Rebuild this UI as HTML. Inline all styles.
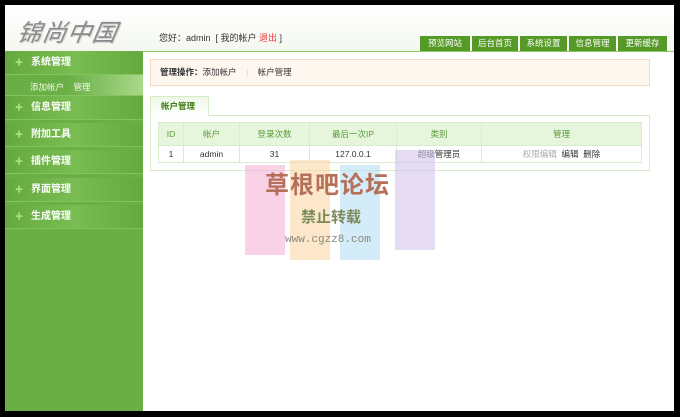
<!DOCTYPE html>
<html><head><meta charset="utf-8"><style>
*{margin:0;padding:0;box-sizing:border-box}
body{width:680px;height:417px;background:#000;position:relative;overflow:hidden;font-family:"Liberation Sans","Noto Sans CJK SC",sans-serif;font-size:9px;color:#333}
.a{position:absolute}
#page{left:5px;top:5px;width:669px;height:406px;background:#fff}
#hdr{left:5px;top:5px;width:669px;height:46px;background:linear-gradient(#fff,#f4f7f0)}
.nav{top:36px;height:15px;background:#559a26;color:#fff;font-size:8.5px;line-height:15px;text-align:center}
#side{left:5px;top:51px;width:138px;height:360px;background:#6aaf45}
.m{left:5px;width:138px;height:24px;color:#fff;font-size:10px;font-weight:bold;line-height:24px;padding-left:26px;background:linear-gradient(90deg,#64a83f,#79bd52 50%,#64a83f);border-bottom:1px solid #82c45d}
.m:before{content:"✚";position:absolute;left:10px;color:#a6e07e;font-size:8px}
table{border-collapse:collapse;font-size:8.5px}
td{border:1px solid #d8ecd0;text-align:center;height:17px}
</style></head><body>
<div class="a" id="page"></div>
<div class="a" id="hdr"></div>
<div class="a" style="left:18px;top:13px;font-size:24px;font-style:italic;color:#8a8a8a;letter-spacing:1px;font-family:'Noto Sans CJK SC',sans-serif;transform:skewX(-10deg);text-shadow:1px 1px 1px #ccc">锦尚中国</div>
<div class="a" style="left:159px;top:31px;font-size:9px;color:#333">您好：admin &nbsp;[ 我的帐户 <span style="color:#e33">退出</span> ]</div>
<div class="a nav" style="left:420px;width:50px">预览网站</div>
<div class="a nav" style="left:472px;width:46px">后台首页</div>
<div class="a nav" style="left:520px;width:47px">系统设置</div>
<div class="a nav" style="left:569px;width:47px">信息管理</div>
<div class="a nav" style="left:618px;width:49px">更新缓存</div>
<div class="a" style="left:143px;top:51px;width:531px;height:1px;background:#8cc46a"></div>
<div class="a" id="side"></div>
<div class="a m" style="top:51px">系统管理</div>
<div class="a" style="left:5px;top:75px;width:138px;height:21px;background:linear-gradient(90deg,#6aaf45 45%,#a9d98a);border-bottom:1px solid #86c360"></div>
<div class="a" style="left:30px;top:81px;font-size:8.5px;color:#f0f8e8">添加帐户 &nbsp;&nbsp;&nbsp;管理</div>
<div class="a m" style="top:96px">信息管理</div>
<div class="a m" style="top:123px">附加工具</div>
<div class="a m" style="top:150px">插件管理</div>
<div class="a m" style="top:178px">界面管理</div>
<div class="a m" style="top:205px">生成管理</div>
<div class="a" style="left:150px;top:59px;width:500px;height:27px;background:#fdf7f0;border:1px solid #f3d8c2;font-size:8.5px;line-height:25px;padding-left:9px"><b>管理操作：</b>添加帐户 &nbsp;&nbsp;&nbsp;<span style="color:#ccc">|</span>&nbsp;&nbsp;&nbsp; 帐户管理</div>
<div class="a" style="left:150px;top:115px;width:500px;height:56px;border:1px solid #d6ecc8"></div>
<div class="a" style="left:150px;top:96px;width:59px;height:20px;border:1px solid #d6ecc8;border-bottom:none;background:linear-gradient(#eef8e6,#fff);color:#3a7a10;font-weight:bold;font-size:8.5px;line-height:18px;padding-left:10px">帐户管理</div>
<table class="a" style="left:158px;top:122px;width:484px">
<tr style="background:#e6f6dc;color:#5a9a3a;height:23px"><td style="width:25px;height:23px">ID</td><td style="width:56px">帐户</td><td style="width:70px">登录次数</td><td style="width:87px">最后一次IP</td><td style="width:85px">类别</td><td>管理</td></tr>
<tr><td>1</td><td>admin</td><td>31</td><td>127.0.0.1</td><td>超级管理员</td><td><span style="color:#aaa">权限编辑</span> &nbsp;编辑 &nbsp;删除</td></tr>
</table>
<div class="a" style="left:245px;top:165px;width:40px;height:90px;background:#f7b4d8;opacity:.6"></div>
<div class="a" style="left:290px;top:160px;width:40px;height:100px;background:#fbd7a8;opacity:.6"></div>
<div class="a" style="left:340px;top:165px;width:40px;height:95px;background:#b8e0f4;opacity:.6"></div>
<div class="a" style="left:395px;top:150px;width:40px;height:100px;background:#d4c4ec;opacity:.6"></div>
<div class="a" style="left:265px;top:165px;font-size:24px;color:#b5705a;font-weight:bold;letter-spacing:1px">草根吧论坛</div>
<div class="a" style="left:301px;top:206px;font-size:15px;color:#7a8a5a;font-weight:bold">禁止转载</div>
<div class="a" style="left:285px;top:234px;font-size:11px;color:#8a8a7a;font-family:'Liberation Mono',monospace">www.cgzz8.com</div>
</body></html>
